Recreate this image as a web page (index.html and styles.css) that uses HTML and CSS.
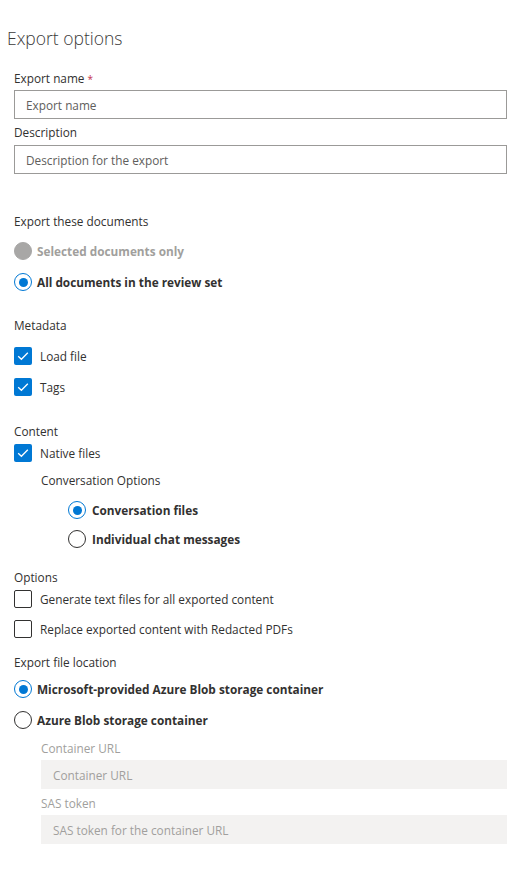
FILE: index.html
```html
<!DOCTYPE html>
<html lang="en">
<head>
<meta charset="utf-8">
<title>Export options</title>
<link rel="stylesheet" href="styles.css">
</head>
<body>
<div class="panel">
  <h1 class="title">Export options</h1>
  <div class="form">
    <label class="label lbl-first">Export name <span class="req">*</span></label>
    <div class="input"><span class="ph">Export name</span></div>
    <label class="label lbl-desc">Description</label>
    <div class="input"><span class="ph">Description for the export</span></div>

    <div class="label sec-docs">Export these documents</div>
    <div class="choice radio-row r-first">
      <span class="radio disabled"></span>
      <span class="rtext disabled-text">Selected documents only</span>
    </div>
    <div class="choice radio-row r-next">
      <span class="radio checked"></span>
      <span class="rtext">All documents in the review set</span>
    </div>

    <div class="label sec-meta">Metadata</div>
    <div class="choice cb-row c-first">
      <span class="cb checked"><svg viewBox="0 0 18 18" width="18" height="18"><polyline points="4.2,9.2 7.4,12.3 13.8,5.8" fill="none" stroke="#fff" stroke-width="1.3"/></svg></span>
      <span class="ctext">Load file</span>
    </div>
    <div class="choice cb-row c-next">
      <span class="cb checked"><svg viewBox="0 0 18 18" width="18" height="18"><polyline points="4.2,9.2 7.4,12.3 13.8,5.8" fill="none" stroke="#fff" stroke-width="1.3"/></svg></span>
      <span class="ctext">Tags</span>
    </div>

    <div class="label sec-content">Content</div>
    <div class="choice cb-row c-tight">
      <span class="cb checked"><svg viewBox="0 0 18 18" width="18" height="18"><polyline points="4.2,9.2 7.4,12.3 13.8,5.8" fill="none" stroke="#fff" stroke-width="1.3"/></svg></span>
      <span class="ctext">Native files</span>
    </div>
    <div class="sub">
      <div class="label sub-label">Conversation Options</div>
      <div class="subchoices">
        <div class="choice radio-row r-conv1">
          <span class="radio checked"></span>
          <span class="rtext">Conversation files</span>
        </div>
        <div class="choice radio-row r-conv2">
          <span class="radio"></span>
          <span class="rtext">Individual chat messages</span>
        </div>
      </div>
    </div>

    <div class="label sec-options">Options</div>
    <div class="choice cb-row c-tight">
      <span class="cb"></span>
      <span class="ctext">Generate text files for all exported content</span>
    </div>
    <div class="choice cb-row c-opt2">
      <span class="cb"></span>
      <span class="ctext">Replace exported content with Redacted PDFs</span>
    </div>

    <div class="label sec-loc">Export file location</div>
    <div class="choice radio-row r-loc1">
      <span class="radio checked"></span>
      <span class="rtext">Microsoft-provided Azure Blob storage container</span>
    </div>
    <div class="choice radio-row r-loc2">
      <span class="radio"></span>
      <span class="rtext">Azure Blob storage container</span>
    </div>

    <div class="sub blob">
      <label class="label disabled-label lbl-url">Container URL</label>
      <div class="input input-disabled"><span class="ph">Container URL</span></div>
      <label class="label disabled-label lbl-sas">SAS token</label>
      <div class="input input-disabled"><span class="ph">SAS token for the container URL</span></div>
    </div>
  </div>
</div>
</body>
</html>
```

FILE: styles.css
```css
* { box-sizing: border-box; }
html, body { margin: 0; padding: 0; background: #fff; }
body {
  font-family: "Open Sans", "Noto Sans", sans-serif;
  font-size: 11.8px;
  color: #323130;
}
.panel { padding: 26px 20px 40px 7px; }
.title {
  margin: 0;
  font-size: 17.5px;
  font-weight: 300;
  line-height: 24px;
  color: #3b3a39;
}
.form { padding-left: 7px; }
.label {
  display: block;
  line-height: 18px;
  height: 18px;
  font-weight: 400;
  color: #323130;
}
.req { color: #c4314b; font-size: 10px; }
.lbl-first { margin-top: 19px; margin-bottom: 3px; }
.lbl-desc { margin-top: 4px; margin-bottom: 4px; }
.input {
  height: 29px;
  border: 1px solid #9b9a98;
  display: flex;
  align-items: center;
  padding-left: 11px;
}
.ph { color: #605e5c; }
.input-disabled { border: none; background: #f3f2f1; padding-left: 12px; }
.input-disabled .ph { color: #a19f9d; }
.disabled-label { color: #a19f9d; }

.choice { display: flex; align-items: center; height: 18px; }
.radio {
  width: 18px; height: 18px; border-radius: 50%;
  border: 1px solid #323130;
  flex: none;
  display: flex; align-items: center; justify-content: center;
  background: #fff;
}
.radio.checked { border-color: #0078d4; }
.radio.checked::after {
  content: ""; width: 9px; height: 9px; border-radius: 50%; background: #0078d4;
}
.radio.disabled { background: #a8a7a6; border-color: #a8a7a6; }
.rtext { margin-left: 5px; font-weight: 700; color: #323130; }
.disabled-text { color: #a19f9d; }

.cb {
  width: 18px; height: 18px; border: 1px solid #323130; border-radius: 2px;
  flex: none; display: flex;
}
.cb.checked { background: #0078d4; border: none; }
.cb svg { display: block; }
.ctext { margin-left: 8px; }

.sec-docs { margin-top: 38px; }
.r-first { margin-top: 12px; }
.r-next { margin-top: 13px; }
.sec-meta { margin-top: 25px; }
.c-first { margin-top: 13px; }
.c-next { margin-top: 13px; }
.sec-content { margin-top: 26px; }
.c-tight { margin-top: 4px; }
.sub { padding-left: 27px; }
.sub-label { margin-top: 9px; }
.subchoices { padding-left: 27px; }
.r-conv1 { margin-top: 12px; }
.r-conv2 { margin-top: 11px; }
.r-conv1 .rtext, .r-conv2 .rtext { margin-left: 6px; }
.sec-options { margin-top: 20px; }
.c-opt2 { margin-top: 12px; }
.sec-loc { margin-top: 15px; }
.r-loc1 { margin-top: 9px; }
.r-loc2 { margin-top: 13px; }
.lbl-url { margin-top: 10px; margin-bottom: 3px; }
.lbl-sas { margin-top: 5px; margin-bottom: 3px; }
```
